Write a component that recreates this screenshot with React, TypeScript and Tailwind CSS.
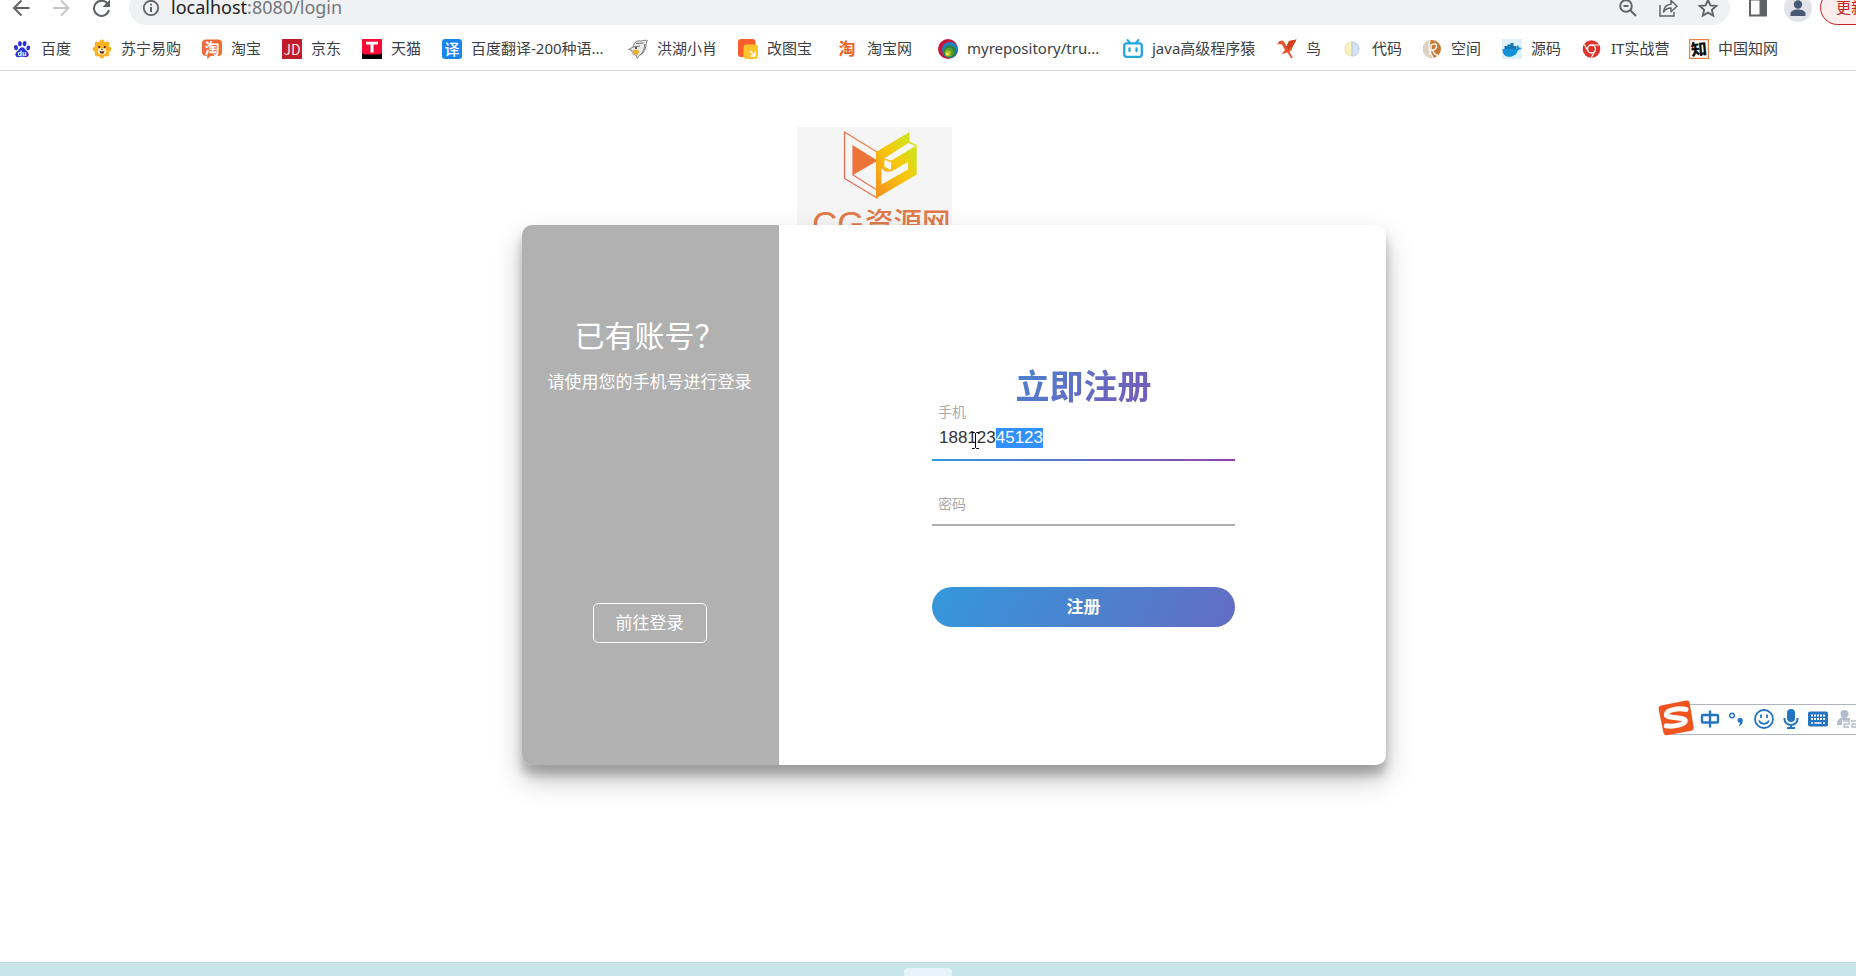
import { useEffect, useRef, type ReactNode } from "react";

const uiFont = "font-['Noto_Sans','Noto_Sans_CJK_SC',sans-serif]";

function Tile({ children }: { children: ReactNode }) {
  return (
    <svg viewBox="0 0 20 20" className="size-5 shrink-0 font-['Noto_Sans_CJK_SC',sans-serif]" aria-hidden="true">
      {children}
    </svg>
  );
}

const bookmarks: { label: string; width: string; icon: ReactNode }[] = [
  {
    label: "百度",
    width: "w-[80px]",
    icon: (
      <Tile>
        <g fill="#2a2fd6">
          <ellipse cx="4" cy="8.6" rx="2" ry="2.6" transform="rotate(-12 4 8.6)" />
          <ellipse cx="7.9" cy="4.6" rx="1.9" ry="2.7" />
          <ellipse cx="12.6" cy="4.7" rx="1.9" ry="2.7" transform="rotate(10 12.6 4.7)" />
          <ellipse cx="16.3" cy="8.9" rx="1.9" ry="2.5" transform="rotate(12 16.3 8.9)" />
          <path d="M10.1 8.3c1.8 0 2.7 1.7 4 3.1 1.4 1.4 3 2.7 2.6 4.6-.4 2-2.3 2.3-4 2.1-1-.1-1.7-.3-2.7-.3s-1.8.2-2.8.3c-1.7.2-3.5-.2-3.8-2.2-.3-1.9 1.3-3.1 2.7-4.5 1.3-1.3 2.2-3.1 4-3.1z" />
        </g>
        <text x="10.1" y="16.6" fontSize="7" fontWeight="700" fill="#fff" textAnchor="middle">du</text>
      </Tile>
    ),
  },
  {
    label: "苏宁易购",
    width: "w-[110px]",
    icon: (
      <Tile>
        <g fill="#fdb022">
          <circle cx="10" cy="10" r="7.8" />
          <circle cx="10" cy="2.8" r="2.3" /><circle cx="15.1" cy="4.9" r="2.3" />
          <circle cx="17.2" cy="10" r="2.3" /><circle cx="15.1" cy="15.1" r="2.3" />
          <circle cx="10" cy="17.2" r="2.3" /><circle cx="4.9" cy="15.1" r="2.3" />
          <circle cx="2.8" cy="10" r="2.3" /><circle cx="4.9" cy="4.9" r="2.3" />
        </g>
        <ellipse cx="10" cy="12.2" rx="4.2" ry="3.2" fill="#fff3d0" />
        <circle cx="7.2" cy="8" r="1" fill="#32210d" />
        <circle cx="12.8" cy="8" r="1" fill="#32210d" />
        <path d="M8.7 9.8h2.6L10 11.2z" fill="#32210d" />
        <path d="M7.5 11.8q2.5 1.5 5 0-.5 3-2.5 3t-2.5-3z" fill="#5a2613" />
      </Tile>
    ),
  },
  {
    label: "淘宝",
    width: "w-[80px]",
    icon: (
      <Tile>
        <path d="M4 .5h12a4 4 0 0 1 4 4V13a4 4 0 0 1-4 4H8.5L5.5 20 5 17H4a4 4 0 0 1-4-4V4.500a4 4 0 0 1 4-4z" fill="#f2693a" />
        <text x="10" y="14.5" fontSize="15" fontWeight="700" fill="#fff" textAnchor="middle">淘</text>
      </Tile>
    ),
  },
  {
    label: "京东",
    width: "w-[80px]",
    icon: (
      <Tile>
        <rect width="20" height="20" fill="#c01c2b" />
        <text x="10" y="15.5" fontSize="14" fill="#fbe6e6" textAnchor="middle">JD</text>
      </Tile>
    ),
  },
  {
    label: "天猫",
    width: "w-[80px]",
    icon: (
      <Tile>
        <rect width="20" height="20" fill="#ff0a36" />
        <path d="M0 14q3 2 5 1.500h10q2 .5 5-1.500v6H0z" fill="#000" />
        <path d="M4 2.800h12v2.700h-4.500v8h-3v-8H4z" fill="#fff" />
      </Tile>
    ),
  },
  {
    label: "百度翻译-200种语...",
    width: "w-[186px]",
    icon: (
      <Tile>
        <rect width="20" height="20" rx="3" fill="#1a84f0" />
        <text x="10" y="15.5" fontSize="15" fontWeight="500" fill="#fff" textAnchor="middle">译</text>
      </Tile>
    ),
  },
  {
    label: "洪湖小肖",
    width: "w-[110px]",
    icon: (
      <Tile>
        <path d="M.5 10.500 5 8C6 3.500 9 1 13 2c3-.8 5-.8 6.500-.5C18 3 18.500 5 17.500 9c-.8 4-3 6-6 7.200L9 19.500l-.5-3C5.500 16 3.500 14 4 11.200z" fill="#e9e9ea" stroke="#77787c" strokeWidth=".9" />
        <path d="M4.500 11.500l4.500-1 2.500 2-2.500 4C6 15.500 4.800 14 4.500 11.500z" fill="#edb02c" />
        <path d="M8 4.500 15.500 4M5 8l7-1M12 16c3-2 4.500-6 5-11" fill="none" stroke="#66676b" strokeWidth=".9" />
        <circle cx="8" cy="9" r="1" fill="#3b3226" />
      </Tile>
    ),
  },
  {
    label: "改图宝",
    width: "w-[100px]",
    icon: (
      <Tile>
        <rect width="17.5" height="18" rx="3" fill="#fa5d2d" />
        <rect x="5.5" y="5.5" width="14.5" height="14.5" rx="3" fill="#fdc52b" />
        <path d="M12 12l5 5m0-4.500V17h-4.500" stroke="#fff" strokeWidth="1.3" fill="none" />
      </Tile>
    ),
  },
  {
    label: "淘宝网",
    width: "w-[100px]",
    icon: (
      <Tile>
        <text x="9" y="16" fontSize="17" fontWeight="700" fill="#f0601f" textAnchor="middle">淘</text>
      </Tile>
    ),
  },
  {
    label: "myrepository/tru...",
    width: "w-[185px]",
    icon: (
      <Tile>
        <circle cx="10" cy="10" r="10" fill="#c4173c" />
        <circle cx="12" cy="11" r="8" fill="#1b83c4" />
        <circle cx="11.8" cy="12.5" r="6.2" fill="#2f7f3f" />
        <circle cx="11" cy="13.3" r="4.6" fill="#5ba02c" />
        <circle cx="10" cy="14.3" r="3" fill="#a6bd22" />
        <circle cx="9.3" cy="15" r="1.5" fill="#f3e53c" />
      </Tile>
    ),
  },
  {
    label: "java高级程序猿",
    width: "w-[154px]",
    icon: (
      <Tile>
        <path d="M4.500 1 7 4m8.500-3L13 4" stroke="#22a7dd" strokeWidth="2" strokeLinecap="round" />
        <rect x="1.2" y="4.4" width="17.6" height="13.4" rx="2.5" fill="#fff" stroke="#22a7dd" strokeWidth="2.3" />
        <path d="M6.500 9.500v2.500m7-2.500v2.500" stroke="#22a7dd" strokeWidth="2.300" strokeLinecap="round" />
      </Tile>
    ),
  },
  {
    label: "鸟",
    width: "w-[66px]",
    icon: (
      <Tile>
        <path d="M0 5.500 2.500 2 5.500 1.500 8 4l1.500 3.500L12 2l7.500-1.500L16.500 6 14.500 11l-2 2 3.500 6h-2L10.500 13.500l-6 1.500L8 11 5 5.500 3 5z" fill="#ea5530" />
        <path d="M9.500 7.500 12 2l7.500-1.500L16.500 6l-5 4.500z" fill="#d33d1f" />
      </Tile>
    ),
  },
  {
    label: "代码",
    width: "w-[79px]",
    icon: (
      <Tile>
        <path d="M9 3C5 3 2 6 2 10s3 7 7 7z" fill="#fbf3bd" stroke="#eadf9c" />
        <path d="M9 3c4 0 7 3 7 7s-3 7-7 7z" fill="#d5e4f2" stroke="#b4cbe2" />
      </Tile>
    ),
  },
  {
    label: "空间",
    width: "w-[80px]",
    icon: (
      <Tile>
        <circle cx="10" cy="10" r="9" fill="#c87a32" />
        <path d="M1 10C1 5 5 1.500 8 1.200 6 5 6 13 11 18.800 5 19.500 1 15 1 10z" fill="#ddd2c4" />
        <path d="M8 1.500Q5 10 11 18.500M9 5v6q0 3-2 4M10 5.500q5-2 4.500 2 0 3-4 3.500 2 5 5.500 5.500" fill="none" stroke="#fff" strokeWidth="1.400" />
      </Tile>
    ),
  },
  {
    label: "源码",
    width: "w-[80px]",
    icon: (
      <Tile>
        <rect width="20" height="20" fill="#dff0f8" />
        <path d="M.5 10h14c.5-1.500.3-3 1-4 1 .7 1.300 1.500 1.300 2.500 1-.2 2 0 2.700.5-.5 1.300-1.800 2-3.300 2-1.500 4.500-4.700 6.800-8.700 6.800C3 17.800.3 15 .5 10z" fill="#1591d8" />
        <path d="M2.500 7h12v3h-12zM5.500 5.500h6V7h-6zM8.500 4h3v2h-3z" fill="#1777b2" />
      </Tile>
    ),
  },
  {
    label: "IT实战营",
    width: "w-[107px]",
    icon: (
      <Tile>
        <circle cx="9.5" cy="10" r="8.8" fill="#dd352e" />
        <circle cx="9.5" cy="10" r="4" fill="#dd352e" stroke="#fff" strokeWidth="1.3" />
        <path d="M9.500 6H17M6 12 2.300 5.500M13 12l-3.700 6.500" stroke="#fff" strokeWidth="1.2" />
      </Tile>
    ),
  },
  {
    label: "中国知网",
    width: "w-[110px]",
    icon: (
      <Tile>
        <rect x=".6" y=".6" width="18.8" height="18.8" fill="#fff" stroke="#ed7d3c" strokeWidth="1.2" />
        <text x="10" y="16" fontSize="16" fontWeight="900" fill="#111" textAnchor="middle" transform="rotate(-5 10 10)">知</text>
      </Tile>
    ),
  },
];

function Toolbar() {
  return (
    <div className="flex h-[25px] items-end overflow-hidden">
      <div className="flex h-[35px] w-[129px] shrink-0 items-center gap-4 pl-[9px]">
        <button aria-label="后退" className="flex size-6 items-center justify-center text-[#5f6368]">
          <svg viewBox="0 0 24 24" className="size-6" fill="none" stroke="currentColor" strokeWidth="2">
            <path d="M20.500 12H5.500M12.500 4.500 5 12l7.500 7.500" />
          </svg>
        </button>
        <button aria-label="前进" className="flex size-6 items-center justify-center text-[#c3c5c8]">
          <svg viewBox="0 0 24 24" className="size-6" fill="none" stroke="currentColor" strokeWidth="2">
            <path d="M4 12h15M12 4.500l7.500 7.500-7.500 7.500" />
          </svg>
        </button>
        <button aria-label="重新加载" className="flex size-6 items-center justify-center text-[#5f6368]">
          <svg viewBox="0 0 24 24" className="size-6" fill="none" stroke="currentColor" strokeWidth="2">
            <path d="M18.500 7.500A7.600 7.600 0 1 0 20 14" />
            <path d="M21 3.500v7.500h-7.500z" fill="currentColor" stroke="none" />
          </svg>
        </button>
      </div>
      <div className="flex h-[35px] min-w-0 flex-1 items-center rounded-full bg-[#f0f1f3] pl-3 pr-2.5 text-[#5f6368]">
        <svg viewBox="0 0 20 20" className="size-5 shrink-0" fill="none" stroke="currentColor" strokeWidth="1.8">
          <circle cx="10" cy="10" r="7.2" />
          <path d="M10 9v5M10 5.800v1.800" strokeWidth="2" />
        </svg>
        <p className="ml-2.5 flex-1 pb-0.5 text-[18px] leading-6 text-[#73777c]">
          <span className="text-[#202124]">localhost</span>:8080/login
        </p>
        <div className="flex gap-4">
          <button aria-label="缩放">
            <svg viewBox="0 0 24 24" className="size-6" fill="none" stroke="currentColor" strokeWidth="2">
              <circle cx="10" cy="10" r="5.8" />
              <path d="M14.500 14.500 20 20M7.500 10h5" />
            </svg>
          </button>
          <button aria-label="分享">
            <svg viewBox="0 0 24 24" className="size-6" fill="none" stroke="currentColor" strokeWidth="1.5">
              <path d="M4 9v11h14v-4" />
              <path d="M7.500 16c.5-5 3-7.500 7.500-7.700V4.500l6 5.700-6 5.500V12c-3.500 0-5.500 1-7.500 4z" strokeLinejoin="round" />
            </svg>
          </button>
          <button aria-label="收藏">
            <svg viewBox="0 0 24 24" className="size-6" fill="none" stroke="currentColor" strokeWidth="1.9">
              <path d="m12 4 2.400 5.400 5.900.6-4.400 3.900 1.300 5.800L12 16.700l-5.200 3 1.300-5.800L3.700 10l5.900-.6z" />
            </svg>
          </button>
        </div>
      </div>
      <div className="flex h-[35px] w-[126px] shrink-0 items-center">
        <button aria-label="侧边栏" className="ml-[18px]">
          <svg viewBox="0 0 20 20" className="size-5">
            <rect x="2" y="1.5" width="16" height="16" fill="#fff" stroke="#5f6368" strokeWidth="2" />
            <path d="M11.500 1h7v17h-7z" fill="#5f6368" />
          </svg>
        </button>
        <button aria-label="个人资料" className="ml-4">
          <svg viewBox="0 0 28 28" className="size-7">
            <circle cx="14" cy="14" r="14" fill="#e2e4ea" />
            <circle cx="14" cy="10.5" r="4.2" fill="#4a5a74" />
            <path d="M6.500 22v-2.500c0-2.500 4-4 7.500-4s7.500 1.500 7.500 4V22z" fill="#4a5a74" />
          </svg>
        </button>
        <button className="ml-2 h-[35px] w-[88px] shrink-0 rounded-full border border-[#c5221f] bg-[#fbeeed] pl-[15px] text-left text-[15px] text-[#c5221f]">
          更新
        </button>
      </div>
    </div>
  );
}

function BookmarkBar() {
  return (
    <nav aria-label="书签" className="flex h-[46px] items-center overflow-hidden border-b border-[#dadce0] pt-0.5 pl-3">
      {bookmarks.map((b) => (
        <a key={b.label} href="#" className={`flex shrink-0 items-center gap-[9px] text-[15px] whitespace-nowrap text-[#3c4043] ${b.width}`}>
          {b.icon}
          <span>{b.label}</span>
        </a>
      ))}
    </nav>
  );
}

function Logo() {
  return (
    <svg viewBox="0 0 155 98" className="ml-[275px] block h-[98px] w-[155px]" role="img" aria-label="CG资源网">
      <defs>
        <linearGradient id="cube-left" x1="0" x2="1" y1="1" y2="0">
          <stop offset="0" stopColor="#e25a5a" />
          <stop offset="1" stopColor="#f08a35" />
        </linearGradient>
        <linearGradient id="cube-right" gradientUnits="userSpaceOnUse" x1="80" x2="121" y1="60" y2="34">
          <stop offset="0" stopColor="#f39a1d" />
          <stop offset=".6" stopColor="#f8c70b" />
          <stop offset="1" stopColor="#d5e01a" />
        </linearGradient>
      </defs>
      <rect width="155" height="98" fill="#f5f5f5" />
      <path d="M47.500 5 80 25v9L56 19v29l24 15v8L47.500 51.500z" fill="#f8f6f4" stroke="url(#cube-left)" strokeWidth="1.2" />
      <path d="M56 19 80 34 56 48z" fill="#ed7438" />
      <path d="M79 25 112.500 5v9.500L119.700 18v29.500L79 71.500z" fill="url(#cube-right)" />
      <path d="M87 31.500 111.500 16l7 3-24 14.500z" fill="#f7f7f5" />
      <path d="M94.500 44.500 111 35v7.500L84.500 57.500V41l3.500 3.500z" fill="#f7f7f5" />
      <path d="M87 32 94.500 35v8.500L87 40z" fill="#f7f7f5" stroke="#f6c315" strokeWidth="1" />
      <text x="15" y="109" fontSize="35" fill="#e07a4a" className="font-['Liberation_Sans',sans-serif]">CG</text>
      <text x="68" y="106" fontSize="28.5" fontWeight="500" fill="#e07a4a" className="font-['Noto_Sans_CJK_SC',sans-serif]">资源网</text>
    </svg>
  );
}

function RegisterForm() {
  const phone = useRef<HTMLInputElement>(null);

  useEffect(() => {
    phone.current?.focus({ preventScroll: true });
    phone.current?.setSelectionRange(6, 11);
  }, []);

  return (
    <form className="flex w-[303px] flex-col pt-36" onSubmit={(e) => e.preventDefault()}>
      <h1 className="bg-[linear-gradient(120deg,#3498db,#8e44ad)] bg-clip-text text-center text-[34px] leading-[34px] font-bold text-transparent">
        立即注册
      </h1>
      <div className="relative flex flex-col pt-px">
        <label htmlFor="phone" className="pl-1.5 text-sm leading-4 text-[#aaaaaa]">手机</label>
        <input
          id="phone"
          ref={phone}
          type="text"
          defaultValue="18812345123"
          className="mb-0.5 h-9 bg-transparent px-[7px] font-['Liberation_Sans',sans-serif] text-[17px] text-[#333333] outline-none selection:bg-[#3390ff] selection:text-white"
        />
        <div className="mt-px h-0.5 bg-[linear-gradient(120deg,#3498db,#8e44ad)]" />
        <svg viewBox="0 0 9 17" className="pointer-events-none absolute top-[29px] left-[39px] h-[17px] w-[9px]" fill="none" stroke="#000" aria-hidden="true">
          <path d="M1 .5h2.500l1 1 1-1H8M4.500 1.500v14M1 16.500h2.500l1-1 1 1H8" />
        </svg>
      </div>
      <div className="relative mt-6 flex flex-col border-b-2 border-[#adadad]">
        <input id="password" type="password" className="h-[39px] bg-transparent px-[7px] text-[17px] outline-none" />
        <label htmlFor="password" className="pointer-events-none absolute top-[11px] left-1.5 text-sm leading-4 text-[#aaaaaa]">密码</label>
      </div>
      <button
        type="submit"
        className="mt-[61px] h-10 rounded-full bg-[linear-gradient(120deg,#3498db,#8e44ad)] bg-[length:200%] text-[17px] font-bold text-white"
      >
        注册
      </button>
    </form>
  );
}

function InputMethodBar() {
  return (
    <div className="absolute top-[700px] right-0 flex h-[38px] w-[198px] items-center overflow-hidden text-[#2474c2]">
      <div className="ml-3 flex h-[31px] flex-1 items-center gap-[7px] overflow-hidden border-y border-[#b2b6bc] bg-white pl-[30px]">
        <svg viewBox="0 0 20 20" className="size-5 shrink-0" fill="none" stroke="currentColor" strokeWidth="2.4">
          <rect x="2" y="6" width="16" height="7.5" rx="1" />
          <path d="M10 1.500v17" />
        </svg>
        <svg viewBox="0 0 20 20" className="size-5 shrink-0">
          <circle cx="5" cy="6.5" r="2.3" fill="none" stroke="currentColor" strokeWidth="1.5" />
          <path d="M10.500 11a2.700 2.700 0 0 1 5.300 0c.2 3.500-1.600 5.600-4.600 6.500 1.200-1.400 1.800-2.300 1.700-3.800-1.300 0-2.400-1.100-2.400-2.700z" fill="currentColor" />
        </svg>
        <svg viewBox="0 0 20 20" className="size-5 shrink-0" fill="none" stroke="currentColor" strokeWidth="1.8">
          <circle cx="10" cy="10" r="9" />
          <path d="M7 5.500v3.500M13 5.500v3.500M5 11.500c2 4.500 8 4.500 10 0" strokeWidth="1.8" />
        </svg>
        <svg viewBox="0 0 20 20" className="size-5 shrink-0" fill="none" stroke="currentColor" strokeWidth="2">
          <rect x="6" y="0" width="8" height="13" rx="4" fill="currentColor" stroke="none" />
          <path d="M3.500 9v1a6.500 6 0 0 0 13 0V9M10 16v3M6 19h8" />
        </svg>
        <svg viewBox="0 0 20 20" className="size-5 shrink-0">
          <rect y="2.5" width="20" height="15" rx="2" fill="currentColor" />
          <path d="M3 6.500h14M3 10h14" stroke="#fff" strokeWidth="2" strokeDasharray="2 1" />
          <path d="M3 14h2m1.500 0h7m1.500 0h2" stroke="#fff" strokeWidth="1.6" />
        </svg>
        <svg viewBox="0 0 24 20" className="h-5 w-6 shrink-0" fill="#b3bccd">
          <circle cx="9.5" cy="5" r="4" />
          <path d="M2 16c0-5 2-7 5-7h8v2H7v5z" />
          <path d="M8 12h6v3H9v3h5M16 12h6v3h-5v3h5" fill="none" stroke="#b3bccd" strokeWidth="1.3" />
        </svg>
      </div>
      <svg viewBox="0 0 36 36" className="absolute top-0 left-0 size-9" aria-hidden="true">
        <path d="M3 5.500 28.500.5Q31 .2 31.600 2.500l4 24.500q.4 3-2.400 3.700L9 35.300q-2.800.4-3.500-2.300L.6 9Q.2 6.300 3 5.500z" fill="#f0541e" />
        <path d="M28 9.500C20 7.500 8.500 10 8.300 14.500c-.2 4.500 19 2 19 6.300 0 3.800-11.500 6.200-19 5" fill="none" stroke="#fff" strokeWidth="5" strokeLinecap="round" />
      </svg>
    </div>
  );
}

export default function App() {
  return (
    <div className={`relative flex min-h-screen flex-col overflow-hidden bg-white ${uiFont}`}>
      <header>
        <Toolbar />
        <BookmarkBar />
      </header>

      <main className="flex flex-1 justify-center pt-14 pl-[52px]">
        <div className="w-[864px]">
          <Logo />
          <div className="relative flex min-h-[540px] overflow-hidden rounded-[10px] bg-white shadow-[0_14px_28px_rgba(0,0,0,0.25),0_10px_10px_rgba(0,0,0,0.22)]">
            <section className="flex w-[257px] shrink-0 flex-col items-center bg-[#b1b1b1] pt-[88px] pr-0.5 text-white">
              <h2 className="text-[30px] leading-[46px]">已有账号？</h2>
              <p className="mt-[11px] text-[17px] leading-6">请使用您的手机号进行登录</p>
              <button className="mt-[209px] h-10 w-[114px] rounded-[5px] border border-white text-[17px]">前往登录</button>
            </section>
            <section className="flex flex-1 justify-center pl-0.5">
              <RegisterForm />
            </section>
          </div>
        </div>
      </main>

      <footer className="flex h-3.5 items-end justify-center border-t border-[#bcd6df] bg-[#c9e5ec]">
        <div className="h-2 w-12 rounded-t bg-[#e6f3fa]" />
      </footer>

      <InputMethodBar />
    </div>
  );
}
